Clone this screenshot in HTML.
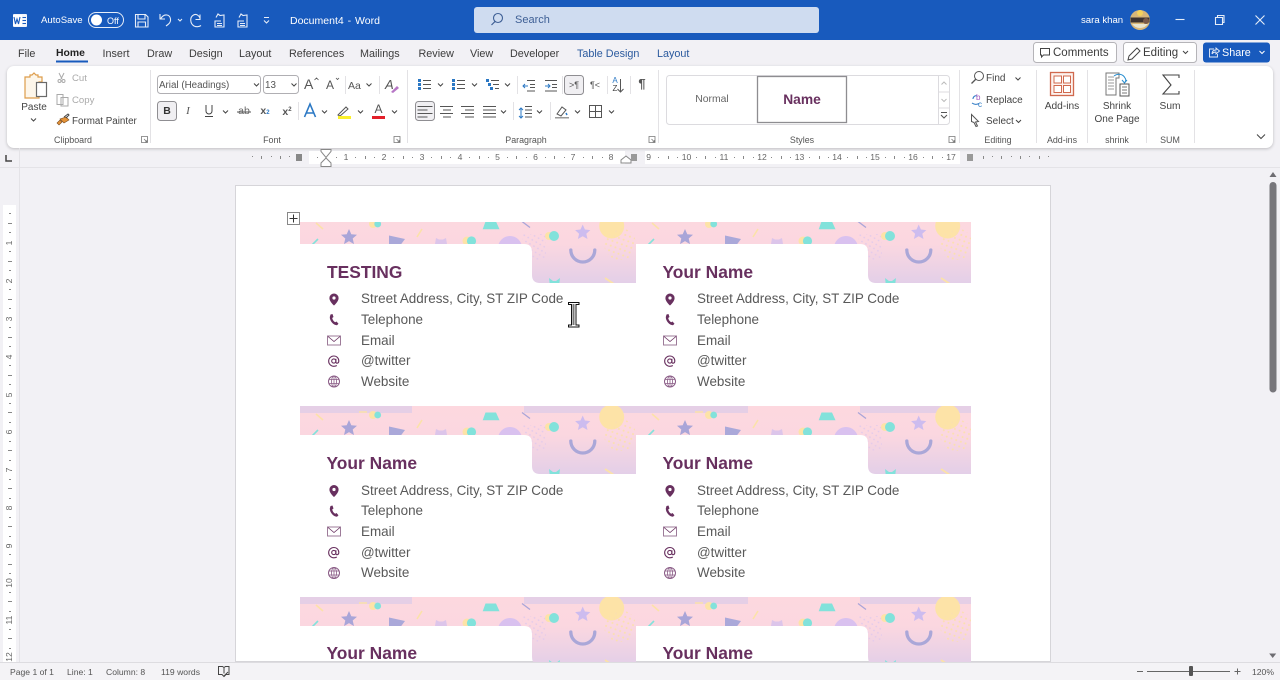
<!DOCTYPE html>
<html><head><meta charset="utf-8"><title>Document4 - Word</title>
<style>
html,body{margin:0;padding:0;width:1280px;height:680px;overflow:hidden;background:#f2f1f5;font-family:"Liberation Sans",sans-serif}
body{filter:blur(.3px)}
.a{position:absolute}
.t{position:absolute;white-space:nowrap;font-size:10px;line-height:14px;color:#444}
.c{transform:translateX(-50%)}
.m{font-size:10.8px;color:#3c3c3c}
.l{font-size:8.9px;color:#555}
.w{color:#fff}
.n{font-size:17.4px;font-weight:bold;color:#68305f;line-height:20px}
.b{font-size:13.45px;color:#595959;line-height:16px}
.r{font-size:8.6px;color:#666;line-height:10px;transform:translateX(-50%)}
.v{font-size:8.6px;color:#666;line-height:10px;width:14px;text-align:center;transform:rotate(-90deg);left:2px}
svg{position:absolute;left:0;top:0}
</style></head><body>
<div class="a" style="left:0;top:0;width:1280px;height:40px;background:#185abd"></div>
<div class="a" style="left:0;top:40px;width:1280px;height:108px;background:#f2f1f5"></div>
<div class="a" style="left:474px;top:7px;width:345px;height:26px;background:#cfdcf0;border-radius:3px"></div>
<div class="a" style="left:7px;top:66px;width:1266px;height:82px;background:#fff;border-radius:7px;box-shadow:0 1px 3px rgba(0,0,0,.22)"></div>
<!-- rulers -->
<div class="a" style="left:0;top:167px;width:1280px;height:1px;background:#e4e3e7"></div>
<div class="a" style="left:19px;top:148px;width:1px;height:514px;background:#e4e3e7"></div>
<div class="a" style="left:309px;top:151px;width:316px;height:13px;background:#fff"></div>
<div class="a" style="left:645px;top:151px;width:315px;height:13px;background:#fff"></div>
<div class="a" style="left:3px;top:205px;width:13px;height:457px;background:#fff"></div>
<!-- page -->
<div class="a" style="left:235px;top:185px;width:816px;height:477px;box-sizing:border-box;background:#fff;border:1px solid #d6d5d9"></div>

<svg width="1280" height="680" viewBox="0 0 1280 680" fill="none">
<defs>
<linearGradient id="g" x1="0" y1="0" x2="0" y2="68" gradientUnits="userSpaceOnUse"><stop offset="0" stop-color="#fdd8df"/><stop offset=".42" stop-color="#fbd7e0"/><stop offset="1" stop-color="#e3cfe8"/></linearGradient>
<clipPath id="cs"><path d="M0 0H336V68H240Q232 68 232 60V37Q232 29 224 29H0Z"/></clipPath>
<clipPath id="top1"><rect x="0" y="222" width="971" height="440"/></clipPath>
<clipPath id="all"><rect x="0" y="0" width="971" height="662"/></clipPath>
<pattern id="dl" width="4.600" height="4.600" patternUnits="userSpaceOnUse" patternTransform="rotate(30)"><circle cx="2" cy="2" r=".9" fill="#e4cbea"/></pattern>
<pattern id="dy" width="5" height="5" patternUnits="userSpaceOnUse" patternTransform="rotate(20)"><circle cx="2.500" cy="2.500" r="1" fill="#fbe0ae"/></pattern>
<g id="card"><g clip-path="url(#cs)">
<rect width="336" height="68" fill="url(#g)"/>
<path d="M0 0H112V7H0ZM224 0H336V7H224Z" fill="#e5cfe6"/>
<circle cx="73" cy="9" r="4" fill="#fde3a7"/><circle cx="77.700" cy="9" r="3.400" fill="#82e2db"/>
<path d="M16 8L23 14" stroke="#fbe2a8" stroke-width="1.600"/><path d="M12 30L18 24" stroke="#82e2db" stroke-width="1.600"/>
<path d="M49 14l2.300 5.200 5.700.6-4.300 3.700 1.300 5.600-5-3-5 3 1.300-5.600-4.300-3.700 5.700-.6z" fill="#a9a5d8"/>
<path d="M89 20.500l16 3.500-6 8h-10z" fill="#aaa8d9"/>
<path d="M117 22l5-8" stroke="#fbe2a8" stroke-width="1.600"/><path d="M59 6h8" stroke="#fbe2a8" stroke-width="1.500"/>
<path d="M136 23l3 1.500h4l3-1.500 1 6 -2 6h-8l-2-6z" fill="#dcc5ea"/>
<circle cx="167" cy="26" r="4.500" fill="#fde3a7"/><circle cx="171.500" cy="26" r="4.600" fill="#82e2db"/>
<path d="M185.500 6.500h10.500l3.500 7.800h-16.800z" fill="#82e2db"/>
<path d="M222 6.500l8 6" stroke="#a9a5d8" stroke-width="1.300"/>
<circle cx="210" cy="33" r="12" fill="#d9c1ef"/>
<path d="M220 19h26v26h-13z" fill="url(#dl)"/>
<circle cx="249" cy="21" r="4" fill="#fde3a7"/><circle cx="254" cy="21" r="5" fill="#82e2db"/>
<path d="M282.700 9.500l2.200 5 5.400.6-4 3.600 1.200 5.300-4.800-2.800-4.800 2.800 1.200-5.300-4-3.600 5.400-.6z" fill="#cdbcef"/>
<circle cx="311.700" cy="11" r="12.500" fill="#fde3a7"/>
<circle cx="320" cy="29" r="16" fill="url(#dy)"/>
<path d="M270.800 35a12 12 0 0 0 24 0" stroke="#aaa7d8" stroke-width="3.300" stroke-linecap="round"/>
<path d="M249 63l4 3h3l4-3 -1 8h-9z" fill="#82e2db"/>
<path d="M305 63l9 6" stroke="#fbe2a8" stroke-width="1.800"/>
</g></g>
<g id="pin"><path d="M6 0.500a4.600 4.600 0 0 0-4.600 4.700C1.400 8.500 6 12.500 6 12.500s4.600-4 4.600-7.300A4.600 4.600 0 0 0 6 .5z" fill="#68305f"/><circle cx="6" cy="5" r="1.600" fill="#fff"/></g>
<g id="ph"><path d="M2.500 1l2-.5 1 3-1.300 1c.3 1.800 1.500 3.400 3 4.300l1.300-.8 2 2.200-1.500 1.600c-3.800-.2-7.300-4.500-7.200-8.300z" fill="#68305f"/></g>
<g id="env"><rect x=".5" y="1.500" width="13" height="9" fill="#fff" stroke="#9d7b99"/><path d="M1 2l6 5 6-5" stroke="#68305f" stroke-width=".8"/></g>
<g id="at"><circle cx="5.800" cy="6" r="2.100" stroke="#68305f" stroke-width="1.100"/><path d="M7.900 3.800v3.300c0 1.600 2.900 1.600 2.900-1.100 0-3-2.200-5-5-5a5 5 0 0 0 0 10.300c1.300 0 2.300-.3 3-.8" stroke="#68305f" stroke-width="1.100"/></g>
<g id="gl"><circle cx="6" cy="6" r="5.500" stroke="#8a5c86"/><ellipse cx="6" cy="6" rx="2.500" ry="5.500" stroke="#8a5c86" stroke-width=".8"/><path d="M.7 4h10.600M.7 8h10.600M6 .5v11" stroke="#8a5c86" stroke-width=".8"/></g>
</defs>

<g clip-path="url(#all)">
<g clip-path="url(#top1)"><use href="#card" x="300" y="215"/><use href="#card" x="636" y="215"/></g>
<use href="#card" x="300" y="406"/><use href="#card" x="636" y="406"/>
<use href="#card" x="300" y="597"/><use href="#card" x="636" y="597"/>
</g>
<!-- contact icons -->
<use href="#pin" x="328" y="293"/><use href="#ph" x="328" y="313.500"/><use href="#env" x="327" y="334.500"/><use href="#at" x="328" y="355"/><use href="#gl" x="328" y="375.500"/>
<use href="#pin" x="664" y="293"/><use href="#ph" x="664" y="313.500"/><use href="#env" x="663" y="334.500"/><use href="#at" x="664" y="355"/><use href="#gl" x="664" y="375.500"/>
<use href="#pin" x="328" y="484.500"/><use href="#ph" x="328" y="505"/><use href="#env" x="327" y="525.500"/><use href="#at" x="328" y="546.500"/><use href="#gl" x="328" y="567"/>
<use href="#pin" x="664" y="484.500"/><use href="#ph" x="664" y="505"/><use href="#env" x="663" y="525.500"/><use href="#at" x="664" y="546.500"/><use href="#gl" x="664" y="567"/>
<!-- table handle -->
<rect x="287.500" y="212.500" width="12" height="12" fill="#fff" stroke="#888"/><path d="M293.500 214.500v8M289.500 218.500h8" stroke="#333"/>
<!-- I-beam -->
<path d="M568.500 302.500h10.500v2h-3v20.500h3v2h-10.500v-2h3v-20.500h-3z" fill="#fff" stroke="#111" stroke-width="1"/>
<path d="M573.500 304v21" stroke="#777" stroke-width="2"/>

<!-- title bar icons -->
<rect x="13" y="14" width="14" height="13" rx="1" fill="#f2f5fb"/><rect x="13" y="15" width="9" height="11" fill="#fff"/><path d="M14 17l1.500 7 1.500-5 1.500 5 1.500-7" stroke="#185abd" stroke-width="1.100"/><path d="M22.500 17.500h3.500M22.500 20.500h3.500M22.500 23.500h3.500" stroke="#185abd"/>
<rect x="88.500" y="12.500" width="35" height="15" rx="7.500" stroke="#e6edf8"/><circle cx="96.500" cy="20" r="5.500" fill="#fff"/>
<g stroke="#e6edf8" stroke-width="1.100"><path d="M135.500 14.500h10l2.500 2.500v10h-12.500zM138 14.500v4.500h7v-4.500M138 27v-5h7.500v5"/>
<path d="M160 14v5h5M160.500 19c2-3.500 4-4.500 6.500-4 4 .8 5 6.500 1 9.500l-2 1.500"/>
<path d="M178 19l2 2 2-2"/>
<path d="M200 14.500v5h-4.500M200 18c-1.500-3-4-4.500-6.500-3-4 2.200-3.500 8.500.5 11 2 1 5 1 7-.5"/>
<path d="M216 17.500l2-3.500 2 1.500 4-.5v12h-9v-6h6M217 23.500h5M217 25.500h5"/>
<path d="M239 17.500l2-3.500 2 1.500 4-.5v12h-9v-6h6M240 23.500h5M240 25.500h5"/>
<path d="M264 17.500h5M264 20.500l2.500 2.500 2.500-2.500"/>
<path d="M1175.500 19.500h9"/><path d="M1215.500 17.500h7v7h-7zM1217.500 17.500v-2h6.500v7h-1.500"/>
<path d="M1255.500 15.500l9 9M1264.500 15.500l-9 9"/></g>
<circle cx="498" cy="18" r="4.500" stroke="#3e5f95" stroke-width="1.100"/><path d="M495 21.500l-3.500 3.500" stroke="#3e5f95" stroke-width="1.200"/>
<circle cx="1140" cy="20" r="10" fill="#d8b779"/><path d="M1130.500 17.500h19v5h-19z" fill="#3d3330"/><path d="M1132 24h16a10 10 0 0 1-16 0z" fill="#e8e4cf"/><circle cx="1140" cy="13" r="3" fill="#f4d25c"/><circle cx="1146" cy="21" r="3" fill="#7a5a48"/>

<!-- top right buttons -->
<rect x="1033.500" y="42.500" width="83" height="20" rx="3" fill="#fff" stroke="#b5b4b8"/>
<path d="M1040.500 48.500h9v6.500h-6l-2 2v-2h-1z" stroke="#444"/>
<rect x="1123.500" y="42.500" width="73" height="20" rx="3" fill="#fff" stroke="#b5b4b8"/>
<path d="M1128 60l1-4 8-8 3 3-8 8z" stroke="#444"/>
<path d="M1183 51l2.500 2.500 2.500-2.500" stroke="#444"/>
<rect x="1203" y="42.500" width="67" height="20" rx="3" fill="#185abd"/>
<path d="M1214 49h-4.500v8h8v-3M1212 54c0-3 2-4 4-4v-2l3.500 3-3.500 3v-2c-2 0-3 .5-4 2" stroke="#e6edf8" stroke-width=".9"/>
<path d="M1259.500 51l2.500 2.500 2.500-2.500" stroke="#fff"/>
<rect x="56" y="60.500" width="32" height="2" fill="#185abd"/>

<!-- ribbon separators -->
<g fill="#e3e2e5"><rect x="150" y="70" width="1" height="73"/><rect x="407" y="70" width="1" height="73"/><rect x="658" y="70" width="1" height="73"/><rect x="959" y="70" width="1" height="73"/><rect x="1036" y="70" width="1" height="73"/><rect x="1087" y="70" width="1" height="73"/><rect x="1146" y="70" width="1" height="73"/><rect x="1194" y="70" width="1" height="73"/>
<rect x="345" y="76" width="1" height="18"/><rect x="379" y="76" width="1" height="18"/><rect x="298" y="102" width="1" height="18"/><rect x="517" y="76" width="1" height="18"/><rect x="562" y="76" width="1" height="18"/><rect x="607" y="76" width="1" height="18"/><rect x="630" y="76" width="1" height="18"/><rect x="513" y="102" width="1" height="18"/><rect x="550" y="102" width="1" height="18"/></g>

<!-- clipboard -->
<path d="M25 77h5v-2h2l2-2 2 2h2v2h4v5h-3v16h-14z" fill="#fdf6ea" stroke="#dd9c4a" stroke-width="1.200"/>
<rect x="36.500" y="82.500" width="10" height="14" fill="#fff" stroke="#6a6a6a" stroke-width="1.200"/>
<path d="M31 118.500l2.500 2.500 2.500-2.500" stroke="#444"/>
<path d="M59 73l3 6M64 73l-3 6" stroke="#aaa"/><circle cx="59.500" cy="81" r="1.500" stroke="#aaa"/><circle cx="63.500" cy="81" r="1.500" stroke="#aaa"/>
<path d="M57 94.500h6v10h-6zM61 97.500h7v8.500h-7z" fill="#fff" stroke="#aaa"/>
<path d="M62 122l-3 3-2-2 3-3zM60 119l4 4 5-3-3-3z" fill="#e59337" stroke="#7a4a1c" stroke-width=".6"/><path d="M64 117l4-3 1 1-3 3" stroke="#444"/>
<path d="M141.500 136.500h6v6h-6zM144 139l3 3M147 142v-2M147 142h-2" stroke="#777" stroke-width=".8"/>

<!-- font group -->
<rect x="157.500" y="75.500" width="103" height="18" rx="3" stroke="#b0afb3"/>
<rect x="263.500" y="75.500" width="35" height="18" rx="3" stroke="#b0afb3"/>
<path d="M254 83.500l2.500 2.500 2.500-2.500M291.500 83.500l2.500 2.500 2.500-2.500M366.500 83.500l2.500 2.500 2.500-2.500M223 110.500l2.500 2.500 2.500-2.500M322 110.500l2.500 2.500 2.500-2.500M358 110.500l2.500 2.500 2.500-2.500M392 110.500l2.500 2.500 2.500-2.500" stroke="#444"/>
<path d="M314.500 80l2-2 2 2M336 78l1.500 1.500L339 78" stroke="#555" stroke-width=".8"/>
<rect x="157.500" y="101.500" width="19" height="19" rx="3" fill="#f0eff2" stroke="#8f8e92"/>
<path d="M206 105v6a3 3 0 0 0 6 0v-6M205 116.500h8" stroke="#444"/>
<path d="M237 112h14" stroke="#555"/>
<path d="M304.500 117l5.500-13 5.500 13M306.500 113h7" stroke="#2b78c4" stroke-width="1.600"/>
<path d="M338 115l8-8 2 2-8 7z" fill="#fff" stroke="#555"/><rect x="338" y="116" width="13" height="3" fill="#fbf02a"/>
<rect x="372" y="116" width="13" height="3" fill="#e3202a"/>
<path d="M391 92l6-6 2 2-6 5z" fill="#b777c6"/>

<!-- paragraph group -->
<g stroke="#555"><path d="M423 80.500h8M423 84.500h8M423 88.500h8M457 80.500h8M457 84.500h8M457 88.500h8M491 80.500h8M493 84.500h6M495 88.500h4"/>
<path d="M527 80.500h8M530 84.500h5M530 87.500h5M527 91h8M545 80.500h12M552 84.500h5M552 87.500h5M545 91h12"/>
<path d="M440 106.500h13M443 110h8M440 113.500h13M443 117h8"/>
<path d="M461 106.500h13M465 110h9M461 113.500h13M465 117h9"/>
<path d="M483 106.500h13M483 110h13M483 113.500h13M483 117h13"/>
<path d="M525 106.500h7M525 110h7M525 113.500h7M525 117h7"/>
<path d="M589.500 105.500h12v12h-12zM595.500 105.500v12M589.500 111.500h12"/>
<path d="M620.500 79v13M617.500 89l3 3 3-3"/></g>
<g fill="#2b78c4"><rect x="418" y="79" width="3" height="3"/><rect x="418" y="83" width="3" height="3"/><rect x="418" y="87" width="3" height="3"/><rect x="452" y="79" width="3" height="3"/><rect x="452" y="83" width="3" height="3"/><rect x="452" y="87" width="3" height="3"/><rect x="486" y="79" width="3" height="3"/><rect x="488" y="83" width="3" height="3"/><rect x="490" y="87" width="3" height="3"/></g>
<path d="M523 86h5M525 84l-2 2 2 2M545 86h5M548 84l2 2-2 2M521 108v10M519 110l2-2 2 2M519 116l2 2 2-2" stroke="#2b78c4"/>
<path d="M438 83.500l2.500 2.500 2.500-2.500M472 83.500l2.500 2.500 2.500-2.500M505 83.500l2.500 2.500 2.500-2.500M501 110.500l2.500 2.500 2.500-2.500M537 110.500l2.500 2.500 2.500-2.500M575 110.500l2.500 2.500 2.500-2.500M609 110.500l2.500 2.500 2.500-2.500" stroke="#444"/>
<rect x="564.500" y="75.500" width="19" height="19" rx="3" fill="#f0eff2" stroke="#8f8e92"/>
<rect x="415.500" y="101.500" width="19" height="19" rx="3" fill="#f0eff2" stroke="#8f8e92"/>
<path d="M417.500 106.500h15M417.500 110h10M417.500 113.500h15M417.500 117h10" stroke="#555"/>
<path d="M557 114l5-7 4 3-5 6z" fill="#fff" stroke="#555"/><path d="M566 113l1 2" stroke="#2b78c4" stroke-width="1.500"/><rect x="555" y="117" width="14" height="1.500" fill="#999"/>
<path d="M649 136.500h6v6h-6zM651.500 139l3 3M654.500 142v-2M654.500 142h-2M394 136.500h6v6h-6zM396.500 139l3 3M399.500 142v-2M399.500 142h-2M949 136.500h6v6h-6zM951.500 139l3 3M954.500 142v-2M954.500 142h-2" stroke="#777" stroke-width=".8"/>

<!-- styles -->
<rect x="666.500" y="75.500" width="283" height="49" rx="3" fill="#fff" stroke="#dcdbdf"/>
<rect x="757.500" y="76.500" width="89" height="46" fill="#fff" stroke="#8e8d91" stroke-width="1.300"/>
<path d="M938.500 75.500v49M938.500 92h11M938.500 108h11" stroke="#dcdbdf"/>
<path d="M941.500 84.500l2.500-2.500 2.500 2.500M941.500 99l2.500 2.500 2.500-2.500" stroke="#bbb"/>
<path d="M941 112.500h6M941 115l3 3 3-3" stroke="#555"/>

<!-- editing -->
<circle cx="979" cy="76" r="4.500" stroke="#555"/><path d="M976 79l-4.500 4.500" stroke="#555" stroke-width="1.300"/>
<path d="M1015.500 77.500l2.500 2.500 2.500-2.500M1016 120l2.500 2.500 2.500-2.500" stroke="#444"/>
<path d="M971.500 121.500v-7l7 7l-3 .5l2 4l-1.500 .5l-2-4z" stroke="#555"/>
<path d="M973 99a3 3 0 0 1 4-3M972 103c2 1.500 4 2 7 .5" stroke="#2b78c4"/>
<!-- add-ins -->
<rect x="1050.500" y="72.500" width="23" height="23" fill="#fdf3ef" stroke="#d0694e" stroke-width="1.300"/>
<path d="M1054 76h7.500v7H1054zM1063.500 76h7v7h-7zM1054 85.500h7.500v7H1054zM1063.500 85.500h7v7h-7z" fill="#fff" stroke="#d0694e"/>
<!-- shrink -->
<path d="M1106 73h13v5h-3v17h-10z" fill="#fff" stroke="#777"/>
<path d="M1108 77h6M1108 80h6M1108 83h6M1108 86h6M1108 89h6" stroke="#999"/>
<rect x="1120" y="84" width="9" height="12" fill="#fff" stroke="#555"/><path d="M1122 87h5M1122 90h5M1122 93h5" stroke="#777"/>
<path d="M1114 76c4-3 9-2 11 2 1 1 1 3 0 4M1122 80l2.500 3 2.500-3" stroke="#2b8fd0"/>
<!-- sum -->
<path d="M1179 78v-3h-16l8 10-8 9h16v-3" stroke="#444" stroke-width="1.100"/>
<path d="M1257 134.500l4 4 4-4" stroke="#444"/>

<!-- ruler markers -->
<path d="M6 155v6h6" stroke="#444" stroke-width="1.500"/>
<rect x="296" y="154" width="6" height="7" fill="#888"/>
<path d="M321 149.500h10v2l-5 6-5-6zM326 158l-5 5v3.500h10v-3.500z" fill="#fff" stroke="#888"/>
<path d="M621 163v-3l5-4 5 4v3z" fill="#fff" stroke="#888"/>
<rect x="631" y="154" width="6" height="7" fill="#999"/>
<rect x="967" y="154" width="6" height="7" fill="#999"/>
<g fill="#888">
<rect x="252" y="156" width="1" height="1"/><rect x="261" y="156" width="1" height="3"/><rect x="271" y="156" width="1" height="1"/><rect x="280" y="156" width="1" height="3"/><rect x="289" y="156" width="1" height="1"/>
<rect x="983" y="156" width="1" height="3"/><rect x="992" y="156" width="1" height="1"/><rect x="1001" y="156" width="1" height="3"/><rect x="1011" y="156" width="1" height="1"/><rect x="1020" y="156" width="1" height="3"/><rect x="1029" y="156" width="1" height="1"/><rect x="1039" y="156" width="1" height="3"/><rect x="1048" y="156" width="1" height="1"/>
<rect x="317" y="157" width="1" height="1"/><rect x="336" y="157" width="1" height="1"/><rect x="355" y="157" width="1" height="1"/><rect x="365" y="156" width="1" height="3"/><rect x="374" y="157" width="1" height="1"/><rect x="393" y="157" width="1" height="1"/><rect x="403" y="156" width="1" height="3"/><rect x="412" y="157" width="1" height="1"/><rect x="431" y="157" width="1" height="1"/><rect x="441" y="156" width="1" height="3"/><rect x="450" y="157" width="1" height="1"/><rect x="469" y="157" width="1" height="1"/><rect x="479" y="156" width="1" height="3"/><rect x="488" y="157" width="1" height="1"/><rect x="507" y="157" width="1" height="1"/><rect x="516" y="156" width="1" height="3"/><rect x="526" y="157" width="1" height="1"/><rect x="545" y="157" width="1" height="1"/><rect x="554" y="156" width="1" height="3"/><rect x="564" y="157" width="1" height="1"/><rect x="583" y="157" width="1" height="1"/><rect x="592" y="156" width="1" height="3"/><rect x="602" y="157" width="1" height="1"/>
<rect x="658" y="157" width="1" height="1"/><rect x="668" y="156" width="1" height="3"/><rect x="677" y="157" width="1" height="1"/><rect x="696" y="157" width="1" height="1"/><rect x="705" y="156" width="1" height="3"/><rect x="715" y="157" width="1" height="1"/><rect x="734" y="157" width="1" height="1"/><rect x="743" y="156" width="1" height="3"/><rect x="753" y="157" width="1" height="1"/><rect x="771" y="157" width="1" height="1"/><rect x="781" y="156" width="1" height="3"/><rect x="790" y="157" width="1" height="1"/><rect x="809" y="157" width="1" height="1"/><rect x="819" y="156" width="1" height="3"/><rect x="828" y="157" width="1" height="1"/><rect x="847" y="157" width="1" height="1"/><rect x="857" y="156" width="1" height="3"/><rect x="866" y="157" width="1" height="1"/><rect x="885" y="157" width="1" height="1"/><rect x="894" y="156" width="1" height="3"/><rect x="904" y="157" width="1" height="1"/><rect x="923" y="157" width="1" height="1"/><rect x="932" y="156" width="1" height="3"/><rect x="942" y="157" width="1" height="1"/>
<rect x="9" y="213" width="2" height="1"/><rect x="8" y="223" width="4" height="1"/><rect x="9" y="232" width="2" height="1"/><rect x="9" y="251" width="2" height="1"/><rect x="8" y="261" width="4" height="1"/><rect x="9" y="270" width="2" height="1"/><rect x="9" y="289" width="2" height="1"/><rect x="8" y="299" width="4" height="1"/><rect x="9" y="308" width="2" height="1"/><rect x="9" y="327" width="2" height="1"/><rect x="8" y="337" width="4" height="1"/><rect x="9" y="346" width="2" height="1"/><rect x="9" y="365" width="2" height="1"/><rect x="8" y="375" width="4" height="1"/><rect x="9" y="384" width="2" height="1"/><rect x="9" y="403" width="2" height="1"/><rect x="8" y="412" width="4" height="1"/><rect x="9" y="422" width="2" height="1"/><rect x="9" y="441" width="2" height="1"/><rect x="8" y="450" width="4" height="1"/><rect x="9" y="460" width="2" height="1"/><rect x="9" y="479" width="2" height="1"/><rect x="8" y="488" width="4" height="1"/><rect x="9" y="498" width="2" height="1"/><rect x="9" y="517" width="2" height="1"/><rect x="8" y="526" width="4" height="1"/><rect x="9" y="536" width="2" height="1"/><rect x="9" y="554" width="2" height="1"/><rect x="8" y="564" width="4" height="1"/><rect x="9" y="573" width="2" height="1"/><rect x="9" y="592" width="2" height="1"/><rect x="8" y="601" width="4" height="1"/><rect x="9" y="611" width="2" height="1"/><rect x="9" y="629" width="2" height="1"/><rect x="8" y="638" width="4" height="1"/><rect x="9" y="648" width="2" height="1"/>
</g>
<!-- scrollbar -->
<path d="M1273 172l3.500 5h-7z" fill="#6e6d72"/>
<rect x="1269.500" y="182" width="7" height="210.500" rx="3.500" fill="#77767b"/>
<path d="M1272.700 658l3.500-4.500h-7z" fill="#6e6d72"/>
<!-- status -->
<rect x="0" y="662" width="1280" height="18" fill="#f4f3f6"/><rect x="0" y="662" width="1280" height="1" fill="#dddce0"/>
<path d="M218.500 666.500h4l1.500 1 1.500-1h3.500v8h-3l-2 2-2-2h-3.500zM224 667.500v6M224 676l4-4" stroke="#444"/>
<path d="M1137 671.500h6M1234.500 671.500h6M1237.500 668.500v6M1147 671.500h83" stroke="#666"/>
<rect x="1189" y="666" width="4" height="10" rx="1" fill="#555"/>
</svg>

<!-- title text -->
<div class="t w" style="left:41px;top:14px;font-size:9.6px">AutoSave</div>
<div class="t w" style="left:107px;top:13.500px;font-size:9px">Off</div>
<div class="t w" style="left:290px;top:14px;font-size:10.5px;word-spacing:1px">Document4 - Word</div>
<div class="t" style="left:515px;top:13px;font-size:11px;color:#3e5f95">Search</div>
<div class="t w" style="left:1081px;top:14px;font-size:9.6px">sara khan</div>

<!-- menu -->
<div class="t m" style="left:18px;top:47px">File</div>
<div class="t m" style="left:56px;top:47px;color:#222;font-weight:bold;font-size:10.4px">Home</div>
<div class="t m" style="left:102.500px;top:47px">Insert</div>
<div class="t m" style="left:147px;top:47px">Draw</div>
<div class="t m" style="left:189px;top:47px">Design</div>
<div class="t m" style="left:239px;top:47px">Layout</div>
<div class="t m" style="left:289px;top:47px">References</div>
<div class="t m" style="left:360px;top:47px">Mailings</div>
<div class="t m" style="left:418.500px;top:47px">Review</div>
<div class="t m" style="left:470px;top:47px">View</div>
<div class="t m" style="left:510px;top:47px">Developer</div>
<div class="t m" style="left:577px;top:47px;color:#2b5a9e">Table Design</div>
<div class="t m" style="left:657px;top:47px;color:#2b5a9e">Layout</div>
<div class="t m" style="left:1053px;top:46px;font-size:11.5px">Comments</div>
<div class="t m" style="left:1143px;top:46px;font-size:11.5px">Editing</div>
<div class="t m w" style="left:1222px;top:46px;color:#fff">Share</div>

<!-- ribbon labels -->
<div class="t c" style="left:34px;top:101px">Paste</div>
<div class="t" style="left:72px;top:72px;font-size:9.6px;color:#aaa">Cut</div>
<div class="t" style="left:72px;top:94px;font-size:9.6px;color:#aaa">Copy</div>
<div class="t" style="left:72px;top:115px;font-size:9.800px">Format Painter</div>
<div class="t" style="left:159px;top:79px;font-size:9.800px;color:#555">Arial (Headings)</div>
<div class="t" style="left:265px;top:79px;font-size:9.800px;color:#555">13</div>
<div class="t" style="left:304px;top:77px;font-size:14px;color:#555">A</div>
<div class="t" style="left:326px;top:78px;font-size:12px;color:#555">A</div>
<div class="t" style="left:348px;top:79px;font-size:10.500px;color:#555">Aa</div>
<div class="t" style="left:385px;top:78px;font-size:13px;color:#555;font-style:italic">A</div>
<div class="t c" style="left:167px;top:104px;font-size:10.500px;font-weight:bold;color:#333">B</div>
<div class="t c" style="left:188px;top:104px;font-size:11px;font-style:italic;font-family:'Liberation Serif',serif;color:#555">I</div>
<div class="t c" style="left:244px;top:104px;font-size:10.500px;color:#666">ab</div>
<div class="t c" style="left:265px;top:104px;font-size:10.500px;font-weight:bold;color:#555">x<span style="font-size:6px;color:#2b78c4">2</span></div>
<div class="t c" style="left:287px;top:103px;font-size:10.500px;font-weight:bold;color:#555">x<span style="font-size:6px;vertical-align:4px;color:#555">2</span></div>
<div class="t c" style="left:378.500px;top:102px;font-size:12px;color:#555">A</div>
<div class="t c" style="left:595px;top:78px;font-size:9px;color:#555">¶&lt;</div>
<div class="t c" style="left:574px;top:78px;font-size:9px;color:#555">&gt;¶</div>
<div class="t c" style="left:642px;top:77px;font-size:13px;font-weight:bold;color:#555">¶</div>
<div class="t c" style="left:615px;top:74px;font-size:8px;color:#2b78c4">A</div>
<div class="t c" style="left:615px;top:82px;font-size:8px;color:#444">Z</div>
<div class="t c" style="left:712px;top:93px;font-size:10.400px;color:#666">Normal</div>
<div class="t c" style="left:802px;top:93px;font-size:13.800px;font-weight:bold;color:#68305f">Name</div>
<div class="t" style="left:986px;top:72px">Find</div>
<div class="t" style="left:986px;top:94px">Replace</div>
<div class="t" style="left:986px;top:115px">Select</div>
<div class="t" style="left:976px;top:91px;font-size:8px;color:#a55cc0">b</div>
<div class="t" style="left:978px;top:98px;font-size:8px;color:#2b78c4">c</div>
<div class="t c" style="left:1062px;top:100px;font-size:10.200px">Add-ins</div>
<div class="t c" style="left:1117px;top:100px;font-size:10px">Shrink</div>
<div class="t c" style="left:1117px;top:113px;font-size:10px">One Page</div>
<div class="t c" style="left:1170px;top:100px;font-size:10.200px">Sum</div>
<div class="t l c" style="left:73px;top:133px">Clipboard</div>
<div class="t l c" style="left:272px;top:133px">Font</div>
<div class="t l c" style="left:526px;top:133px">Paragraph</div>
<div class="t l c" style="left:802px;top:133px">Styles</div>
<div class="t l c" style="left:998px;top:133px">Editing</div>
<div class="t l c" style="left:1062px;top:133px">Add-ins</div>
<div class="t l c" style="left:1117px;top:133px">shrink</div>
<div class="t l c" style="left:1170px;top:133px">SUM</div>

<!-- ruler numbers -->
<div class="t r" style="left:346px;top:152px">1</div><div class="t r" style="left:384px;top:152px">2</div><div class="t r" style="left:422px;top:152px">3</div><div class="t r" style="left:460px;top:152px">4</div><div class="t r" style="left:497.500px;top:152px">5</div><div class="t r" style="left:535.500px;top:152px">6</div><div class="t r" style="left:573px;top:152px">7</div><div class="t r" style="left:611px;top:152px">8</div><div class="t r" style="left:648.700px;top:152px">9</div><div class="t r" style="left:686.500px;top:152px">10</div><div class="t r" style="left:724px;top:152px">11</div><div class="t r" style="left:762px;top:152px">12</div><div class="t r" style="left:799.500px;top:152px">13</div><div class="t r" style="left:837px;top:152px">14</div><div class="t r" style="left:875px;top:152px">15</div><div class="t r" style="left:913px;top:152px">16</div><div class="t r" style="left:951px;top:152px">17</div>
<div class="t v" style="top:238px">1</div><div class="t v" style="top:276px">2</div><div class="t v" style="top:314px">3</div><div class="t v" style="top:352px">4</div><div class="t v" style="top:390px">5</div><div class="t v" style="top:427px">6</div><div class="t v" style="top:465px">7</div><div class="t v" style="top:503px">8</div><div class="t v" style="top:541px">9</div><div class="t v" style="top:578px">10</div><div class="t v" style="top:615px">11</div><div class="t v" style="top:652px;height:10px;overflow:hidden">12</div>

<!-- document text -->
<div class="t n" style="left:327px;top:262px">TESTING</div>
<div class="t b" style="left:361px;top:291px">Street Address, City, ST ZIP Code</div>
<div class="t b" style="left:361px;top:312px">Telephone</div>
<div class="t b" style="left:361px;top:333px">Email</div>
<div class="t b" style="left:361px;top:353px">@twitter</div>
<div class="t b" style="left:361px;top:374px">Website</div>
<div class="t n" style="left:662.500px;top:262px">Your Name</div>
<div class="t b" style="left:697px;top:291px">Street Address, City, ST ZIP Code</div>
<div class="t b" style="left:697px;top:312px">Telephone</div>
<div class="t b" style="left:697px;top:333px">Email</div>
<div class="t b" style="left:697px;top:353px">@twitter</div>
<div class="t b" style="left:697px;top:374px">Website</div>
<div class="t n" style="left:326.500px;top:453px">Your Name</div>
<div class="t b" style="left:361px;top:483px">Street Address, City, ST ZIP Code</div>
<div class="t b" style="left:361px;top:503px">Telephone</div>
<div class="t b" style="left:361px;top:524px">Email</div>
<div class="t b" style="left:361px;top:545px">@twitter</div>
<div class="t b" style="left:361px;top:565px">Website</div>
<div class="t n" style="left:662.500px;top:453px">Your Name</div>
<div class="t b" style="left:697px;top:483px">Street Address, City, ST ZIP Code</div>
<div class="t b" style="left:697px;top:503px">Telephone</div>
<div class="t b" style="left:697px;top:524px">Email</div>
<div class="t b" style="left:697px;top:545px">@twitter</div>
<div class="t b" style="left:697px;top:565px">Website</div>
<div class="t n" style="left:326.500px;top:643px">Your Name</div>
<div class="t n" style="left:662.500px;top:643px">Your Name</div>

<!-- status text -->
<div class="t" style="left:10px;top:665px;font-size:8.600px;line-height:14px;color:#555">Page 1 of 1</div>
<div class="t" style="left:67px;top:665px;font-size:8.600px;color:#555">Line: 1</div>
<div class="t" style="left:106px;top:665px;font-size:8.600px;color:#555">Column: 8</div>
<div class="t" style="left:161px;top:665px;font-size:8.600px;color:#555">119 words</div>
<div class="t" style="left:1252px;top:665px;font-size:8.600px;color:#555">120%</div>
</body></html>
